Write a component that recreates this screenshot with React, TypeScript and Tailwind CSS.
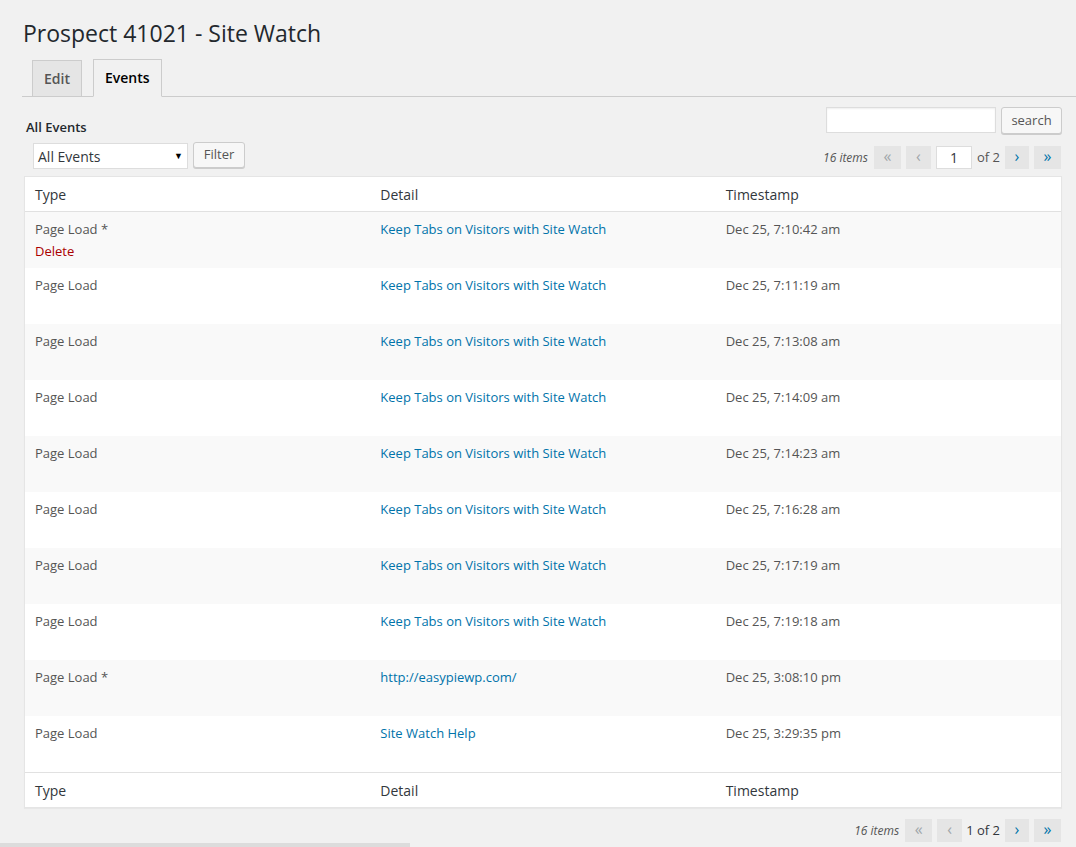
import React from 'react';

type EventRow = {
  type: string;
  detail: string;
  timestamp: string;
  showDelete?: boolean;
};

const events: EventRow[] = [
  { type: 'Page Load *', detail: 'Keep Tabs on Visitors with Site Watch', timestamp: 'Dec 25, 7:10:42 am', showDelete: true },
  { type: 'Page Load', detail: 'Keep Tabs on Visitors with Site Watch', timestamp: 'Dec 25, 7:11:19 am' },
  { type: 'Page Load', detail: 'Keep Tabs on Visitors with Site Watch', timestamp: 'Dec 25, 7:13:08 am' },
  { type: 'Page Load', detail: 'Keep Tabs on Visitors with Site Watch', timestamp: 'Dec 25, 7:14:09 am' },
  { type: 'Page Load', detail: 'Keep Tabs on Visitors with Site Watch', timestamp: 'Dec 25, 7:14:23 am' },
  { type: 'Page Load', detail: 'Keep Tabs on Visitors with Site Watch', timestamp: 'Dec 25, 7:16:28 am' },
  { type: 'Page Load', detail: 'Keep Tabs on Visitors with Site Watch', timestamp: 'Dec 25, 7:17:19 am' },
  { type: 'Page Load', detail: 'Keep Tabs on Visitors with Site Watch', timestamp: 'Dec 25, 7:19:18 am' },
  { type: 'Page Load *', detail: 'http://easypiewp.com/', timestamp: 'Dec 25, 3:08:10 pm' },
  { type: 'Page Load', detail: 'Site Watch Help', timestamp: 'Dec 25, 3:29:35 pm' },
];

function PageButton({ label, width, disabled }: { label: string; width: string; disabled?: boolean }) {
  return (
    <span
      className={`flex h-[23px] items-center justify-center bg-[#e5e5e5] pb-[3px] text-[16px] leading-none ${width} ${
        disabled ? 'text-[#a0a5aa]' : 'text-[#0073aa]'
      }`}
    >
      {label}
    </span>
  );
}

function Pagination({ withInput }: { withInput: boolean }) {
  return (
    <div className="flex items-center text-[13px] text-[#555]">
      <span className="mr-[6px] text-[12px] italic">16 items</span>
      <PageButton label="«" width="w-[27px]" disabled />
      <span className="ml-[5px]" />
      <PageButton label="‹" width="w-[25px]" disabled />
      {withInput ? (
        <>
          <span className="ml-[5px] flex h-[23px] w-[36px] items-center justify-center border border-[#ddd] bg-white text-[14px] text-[#32373c]">
            1
          </span>
          <span className="ml-[5px] text-[13px]">of 2</span>
        </>
      ) : (
        <span className="ml-[4px] text-[13px] text-[#32373c]">1 of 2</span>
      )}
      <span className="ml-[5px]" />
      <PageButton label="›" width="w-[24px]" />
      <span className="ml-[5px]" />
      <PageButton label="»" width="w-[27px]" />
    </div>
  );
}

function HeaderRow({ top }: { top?: boolean }) {
  return (
    <div
      className={`grid h-[35px] grid-cols-3 items-center text-[14px] text-[#32373c] ${
        top ? 'border-b border-[#e1e1e1]' : 'border-t border-[#e1e1e1]'
      }`}
    >
      <div className="px-[10px]">Type</div>
      <div className="px-[10px]">Detail</div>
      <div className="px-[10px]">Timestamp</div>
    </div>
  );
}

export default function App() {
  return (
    <div className="min-h-[847px] bg-[#f1f1f1] font-['Open_Sans',sans-serif]">
      <div className="pl-[24px] pr-[14px]">
        <h1 className="pt-[18px] text-[23px] leading-[30px] font-normal text-[#23282d] ml-[-1px]">
          Prospect 41021 - Site Watch
        </h1>

        <div className="ml-[-2px] mr-[-14px] mt-[11px] flex items-end border-b border-[#ccc] pl-[10px]">
          <span className="mb-[-1px] h-[37px] border border-[#ccc] bg-[#e5e5e5] px-[11px] text-[14px] font-semibold leading-[35px] text-[#555]">
            Edit
          </span>
          <span className="mb-[-1px] ml-[11px] h-[38px] border border-b-[#f1f1f1] border-[#ccc] bg-[#f1f1f1] px-[11px] text-[14px] font-semibold leading-[36px] text-black">
            Events
          </span>
        </div>

        <div className="flex items-start justify-between">
          <span className="ml-[2px] mt-[23px] text-[13px] font-semibold leading-[14px] text-[#23282d]">All Events</span>
          <div className="mt-[10px] flex items-start">
            <span className="h-[26px] w-[170px] border border-[#ddd] bg-white shadow-[inset_0_1px_2px_rgba(0,0,0,0.07)]" />
            <span className="ml-[5px] flex h-[27px] w-[61px] items-center justify-center rounded-[3px] border border-[#ccc] bg-[#f7f7f7] text-[13px] text-[#555] shadow-[0_1px_0_#ccc]">
              search
            </span>
          </div>
        </div>

        <div className="mt-[8px] flex items-start justify-between">
          <div className="ml-[9px] flex items-start">
            <div className="mt-[1px] flex h-[26px] w-[155px] items-center justify-between border border-[#ddd] bg-white pl-[4px] pr-[4px] text-[14px] text-[#32373c]">
              <span>All Events</span>
              <span className="text-[9px] text-black">▼</span>
            </div>
            <span className="ml-[5px] flex h-[26px] w-[52px] items-center justify-center rounded-[3px] border border-[#ccc] bg-[#f7f7f7] text-[13px] text-[#555] shadow-[0_1px_0_#ccc]">
              Filter
            </span>
          </div>
          <div className="mt-[4px] mr-[1px]">
            <Pagination withInput />
          </div>
        </div>

        <div className="mt-[7px] border border-[#e5e5e5] bg-white shadow-[0_1px_1px_rgba(0,0,0,0.04)]">
          <HeaderRow top />
          {events.map((ev, i) => (
            <div
              key={i}
              className={`grid h-[56px] grid-cols-3 pt-[8px] text-[13px] leading-[19.5px] ${
                i % 2 === 0 ? 'bg-[#f9f9f9]' : 'bg-white'
              }`}
            >
              <div className="px-[10px] text-[#555]">
                <div>{ev.type}</div>
                {ev.showDelete && <div className="pt-[2px] text-[#a00]">Delete</div>}
              </div>
              <div className="px-[10px] text-[#0073aa]">{ev.detail}</div>
              <div className="px-[10px] text-[#555]">{ev.timestamp}</div>
            </div>
          ))}
          <HeaderRow />
        </div>

        <div className="mt-[11px] flex justify-end pr-[1px]">
          <Pagination withInput={false} />
        </div>
      </div>
      <div className="mt-[1px] h-[4px] w-[410px] bg-[#dcdcdc]" />
    </div>
  );
}
